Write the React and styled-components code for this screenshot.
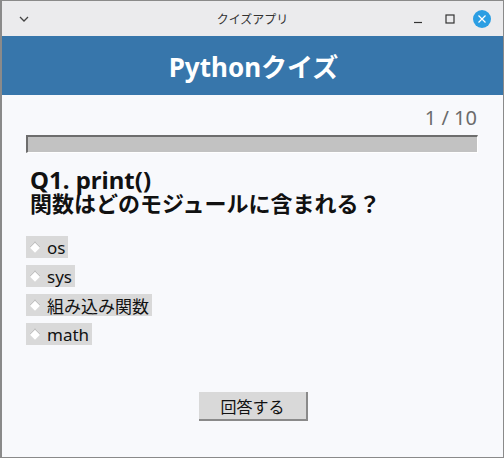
import React, { useState } from 'react';
import styled, { createGlobalStyle } from 'styled-components';

const GlobalStyle = createGlobalStyle`
  html, body { margin: 0; padding: 0; background: #f8f9fc; }
  body { font-family: "Noto Sans", "Noto Sans CJK JP", sans-serif; }
`;

const Window = styled.div`
  width: 504px;
  height: 458px;
  box-sizing: border-box;
  border: 1px solid #8a8a8a;
  border-left-width: 2px;
  display: flex;
  flex-direction: column;
  background: #f8f9fc;
  overflow: hidden;
`;

const TitleBar = styled.div`
  height: 35px;
  flex-shrink: 0;
  display: flex;
  align-items: center;
  background: #ebebed;
  padding: 0 12px 0 16px;
  position: relative;
`;

const TitleText = styled.div`
  position: absolute;
  left: 0;
  right: 0;
  text-align: center;
  font-family: "Noto Sans CJK JP", sans-serif;
  font-size: 12px;
  color: #333;
  pointer-events: none;
`;

const TitleButtons = styled.div`
  margin-left: auto;
  display: flex;
  align-items: center;
  gap: 14px;
`;

const IconBox = styled.div`
  width: 18px;
  height: 18px;
  display: flex;
  align-items: center;
  justify-content: center;
  border-radius: 50%;
  background: ${(p) => p.$bg || 'transparent'};
`;

const Header = styled.div`
  height: 59px;
  flex-shrink: 0;
  background: #3776ab;
  color: #fff;
  display: flex;
  align-items: center;
  justify-content: center;
  font-size: 26px;
  font-weight: 700;
  padding-left: 2px;
`;

const Content = styled.div`
  padding: 0 25px 0 24px;
  display: flex;
  flex-direction: column;
`;

const Counter = styled.div`
  text-align: right;
  font-size: 20px;
  color: #6b6b6b;
  margin-top: 10px;
  padding-right: 1px;
  line-height: 26px;
`;

const Progress = styled.div`
  margin-top: 4px;
  height: 18px;
  box-sizing: border-box;
  background: #c2c2c2;
  border-top: 2px solid #6d6d6d;
  border-left: 2px solid #6d6d6d;
  border-bottom: 1px solid #fff;
  border-right: 1px solid #fff;
`;

const Question = styled.div`
  margin-top: 15px;
  padding-left: 4px;
  font-weight: 700;
  color: #111;
`;

const QuestionLine = styled.div`
  font-size: ${(p) => p.$size}px;
  line-height: ${(p) => p.$lh}px;
  white-space: nowrap;
`;

const Options = styled.div`
  margin-top: 22px;
  display: flex;
  flex-direction: column;
  align-items: flex-start;
  gap: 7px;
`;

const Option = styled.label`
  display: flex;
  align-items: center;
  height: 22px;
  background: #d9d9d9;
  padding: 0 3px 0 2px;
  font-size: 17px;
  color: #111;
  cursor: pointer;
`;

const Diamond = styled.span`
  width: 7px;
  height: 7px;
  margin: 0 8px 0 3px;
  background: ${(p) => (p.$on ? '#3776ab' : '#fff')};
  border-top: 1px solid #bdbdbd;
  border-left: 1px solid #bdbdbd;
  transform: rotate(45deg);
`;

const Footer = styled.div`
  margin-top: 47px;
  display: flex;
  justify-content: center;
  padding-left: 3px;
`;

const AnswerButton = styled.button`
  width: 109px;
  height: 29px;
  background: #d9d9d9;
  border: none;
  border-right: 2px solid #8a8a8a;
  border-bottom: 2px solid #8a8a8a;
  font-family: "Noto Sans CJK JP", sans-serif;
  font-size: 16px;
  color: #111;
  padding: 0;
  cursor: pointer;
`;

const choices = ['os', 'sys', '組み込み関数', 'math'];

export default function App() {
  const [picked, setPicked] = useState(null);

  return (
    <>
      <GlobalStyle />
      <Window>
        <TitleBar>
          <svg width="12" height="8" viewBox="0 0 12 8">
            <path d="M2 2 L6 6 L10 2" fill="none" stroke="#444" strokeWidth="1.3" />
          </svg>
          <TitleText>クイズアプリ</TitleText>
          <TitleButtons>
            <IconBox>
              <svg width="10" height="10" viewBox="0 0 10 10">
                <path d="M1 8.5 H9" stroke="#333" strokeWidth="1.2" />
              </svg>
            </IconBox>
            <IconBox>
              <svg width="10" height="10" viewBox="0 0 10 10">
                <rect x="1" y="1" width="8" height="8" fill="none" stroke="#333" strokeWidth="1.2" />
              </svg>
            </IconBox>
            <IconBox $bg="#2b9ee3">
              <svg width="10" height="10" viewBox="0 0 10 10">
                <path d="M1.5 1.5 L8.5 8.5 M8.5 1.5 L1.5 8.5" stroke="#fff" strokeWidth="1.2" />
              </svg>
            </IconBox>
          </TitleButtons>
        </TitleBar>

        <Header>Pythonクイズ</Header>

        <Content>
          <Counter>1 / 10</Counter>
          <Progress />
          <Question>
            <QuestionLine $size={24} $lh={24}>Q1. print()</QuestionLine>
            <QuestionLine $size={22} $lh={22}>関数はどのモジュールに含まれる？</QuestionLine>
          </Question>
          <Options>
            {choices.map((c, i) => (
              <Option key={c} onClick={() => setPicked(i)}>
                <Diamond $on={picked === i} />
                {c}
              </Option>
            ))}
          </Options>
          <Footer>
            <AnswerButton>回答する</AnswerButton>
          </Footer>
        </Content>
      </Window>
    </>
  );
}
